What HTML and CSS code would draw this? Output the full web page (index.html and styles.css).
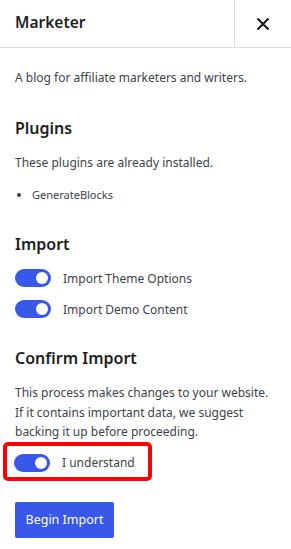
FILE: index.html
```html
<!DOCTYPE html>
<html lang="en">
<head>
  <meta charset="UTF-8">
  <title>Marketer</title>
  <link rel="stylesheet" href="styles.css">
</head>
<body>

  <header class="panel-header">
    <h1 class="title">Marketer</h1>
    <button class="close" aria-label="Close">
      <svg width="14" height="14" viewBox="0 0 14 14"><path d="M1.5 1.5l11 11M12.5 1.5l-11 11" stroke="#1e1e1e" stroke-width="2.2" fill="none"/></svg>
    </button>
  </header>

  <main class="content">
    <p class="desc">A blog for affiliate marketers and writers.</p>

    <h2 class="heading plugins-heading">Plugins</h2>
    <p class="text">These plugins are already installed.</p>
    <ul class="plugin-list">
      <li>GenerateBlocks</li>
    </ul>

    <h2 class="heading">Import</h2>
    <label class="toggle-row first">
      <span class="toggle"></span>
      Import Theme Options
    </label>
    <label class="toggle-row">
      <span class="toggle"></span>
      Import Demo Content
    </label>

    <h2 class="heading">Confirm Import</h2>
    <p class="text confirm-text">This process makes changes to your website. If it contains important data, we suggest backing it up before proceeding.</p>
    <div class="highlight">
      <label class="toggle-row inner">
        <span class="toggle"></span>
        I understand
      </label>
    </div>

    <button class="begin">Begin Import</button>
  </main>

</body>
</html>
```

FILE: styles.css
```css
body {
  font-family: 'Noto Sans', 'Open Sans', sans-serif;
  background-color: #fff;
  color: #3c434a;
  margin: 0;
  padding: 0;
  font-size: 12px;
}

.panel-header {
  display: flex;
  height: 47px;
  border-bottom: 1px solid #dcdcde;
}

.title {
  flex: 1;
  margin: 0;
  padding-left: 15px;
  font-size: 15.5px;
  font-weight: 600;
  line-height: 44px;
  color: #1e1e1e;
  border-right: 1px solid #dcdcde;
}

.close {
  width: 56px;
  border: none;
  background: none;
  padding: 0;
  display: flex;
  align-items: center;
  justify-content: center;
}

.content {
  padding: 0 15px;
}

.desc {
  margin: 20px 0 0;
  line-height: 20px;
}

.heading {
  margin: 27px 0 0;
  font-size: 16px;
  font-weight: 600;
  line-height: 24px;
  color: #1e1e1e;
}

.plugins-heading {
  margin-top: 28px;
}

.text {
  margin: 13px 0 0;
  line-height: 20px;
}

.confirm-text {
  line-height: 19.5px;
}

.plugin-list {
  margin: 12px 0 0;
  padding-left: 17px;
  font-size: 11px;
  line-height: 20px;
}

.toggle-row {
  display: flex;
  align-items: center;
  gap: 12px;
  height: 20px;
  margin-top: 11px;
}

.toggle-row.first {
  margin-top: 12px;
}

.toggle {
  position: relative;
  width: 36px;
  height: 18px;
  border-radius: 9px;
  background-color: #3858e9;
}

.toggle::after {
  content: '';
  position: absolute;
  right: 3px;
  top: 3px;
  width: 12px;
  height: 12px;
  border-radius: 50%;
  background: #fff;
}

.highlight {
  display: inline-block;
  margin: 0 0 0 -12px;
  padding: 7px 13px 4px 7px;
  border: 4px solid #f00;
  border-radius: 5px;
}

.toggle-row.inner {
  margin-top: 0;
}

.begin {
  display: block;
  margin-top: 21px;
  width: 99px;
  height: 36px;
  border: none;
  border-radius: 2px;
  background-color: #3858e9;
  color: #fff;
  font-family: inherit;
  font-size: 12.5px;
  padding: 0;
}
```
